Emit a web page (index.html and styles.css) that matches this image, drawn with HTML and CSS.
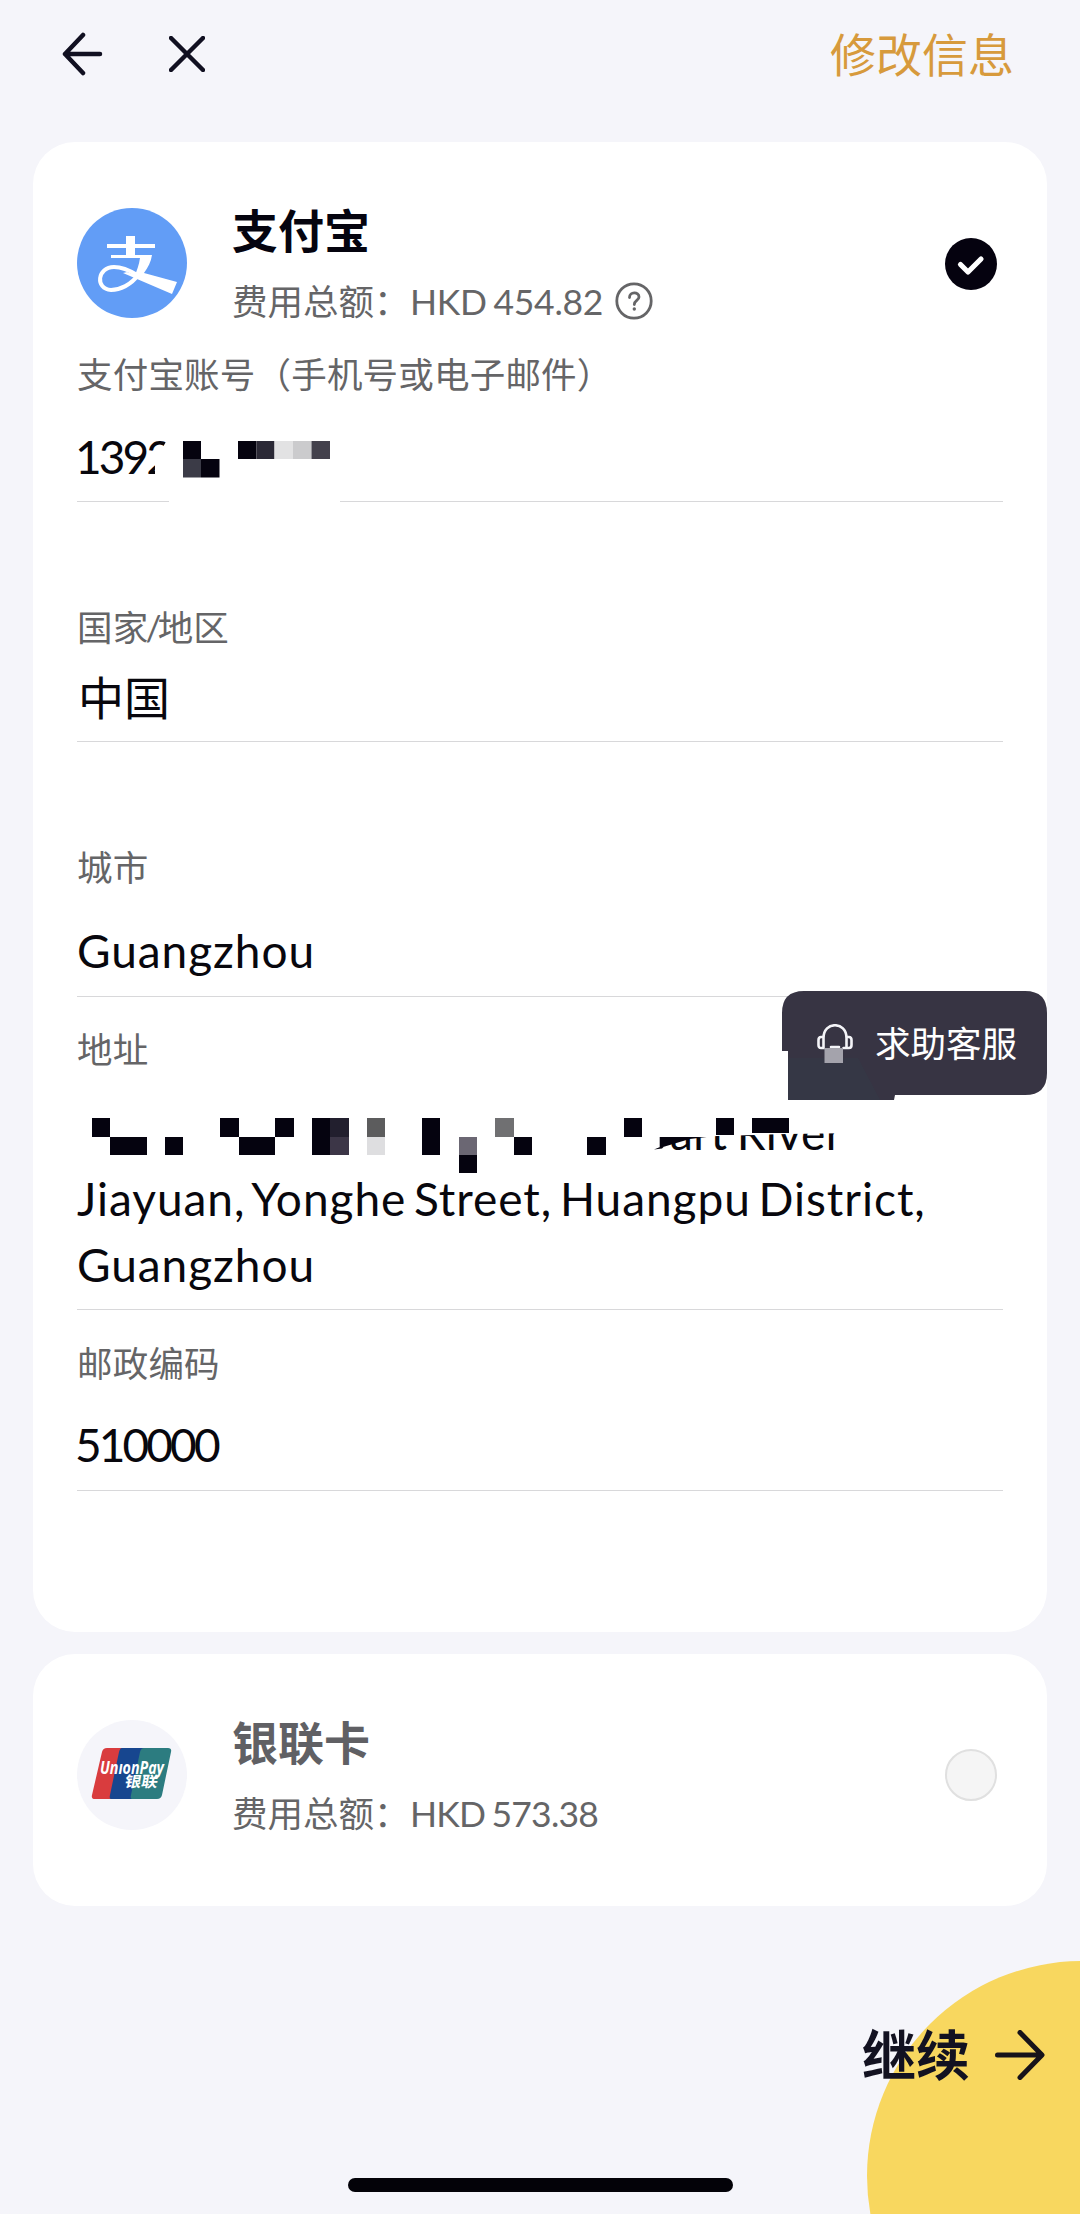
FILE: index.html
```html
<!DOCTYPE html>
<html lang="zh-CN">
<head>
<meta charset="utf-8">
<title>支付方式</title>
<link rel="stylesheet" href="styles.css">
</head>
<body>
<div class="screen">
  <header class="topbar">
    <svg class="icon-back" viewBox="0 0 42 44"><path d="M22 3 4 22l18 19M4 22h35"/></svg>
    <svg class="icon-close" viewBox="0 0 36 36"><path d="M2 2l32 32M34 2 2 34"/></svg>
    <a class="edit">修改信息</a>
  </header>

  <main class="cards">
    <section class="card card-alipay">
      <div class="method">
        <svg class="logo" viewBox="0 0 110 110">
          <circle cx="55" cy="55" r="55" fill="#629df6"/>
          <path fill="#fff" d="M49 28h9v8h20v4H58v7h17c-1 7-4 12-8 18l33 9-5 12-35-15-14-6 4-1 8 3c2-5 4-10 5-17H34v-3h15v-7H30v-4h19z"/>
          <path fill="none" stroke="#fff" stroke-width="4" stroke-linecap="round" d="M62 66C54 77 43 82 34 82 18 81 20 59 37 59c8 0 15 3 23 8"/>
        </svg>
        <div class="method-text">
          <h2 class="name">支付宝</h2>
          <p class="fee"><span class="fee-label">费用总额：</span><span class="amount">HKD 454.82</span>
            <svg class="help" viewBox="0 0 38 38"><circle cx="19" cy="19" r="17.2"/><path d="M14.5 15.5c0-6 9.500-6 9.500-.5 0 3.500-4.700 3.500-4.700 7.500"/><circle class="dot" cx="19.300" cy="27" r="1.700"/></svg>
          </p>
        </div>
        <svg class="check" viewBox="0 0 52 52"><circle cx="26" cy="26" r="26" fill="#05020f"/><path d="M15.500 26.500l7.500 7.500L36 21"/></svg>
      </div>

      <div class="field f-account">
        <label class="label">支付宝账号（手机号或电子邮件）</label>
        <div class="value digits">1392</div>
        <svg class="mosaic mosaic-account" viewBox="0 0 264 80">
          <path fill="#fff" d="M92 0h171v80H92zM70 31l13-2 7-12h4v40H78V42l-8 6z"/>
          <path fill="#05030f" d="M106 18h18v18h-18zM124 36h18.500v18.500H124zM161 18h18.500v18H161z"/>
          <path fill="#3b3b47" d="M106 36h18v18.500h-18z"/><path fill="#2b2936" d="M179.500 18h18v18h-18z"/>
          <path fill="#e2e2e3" d="M197.500 18h18.500v18h-18.500z"/><path fill="#cbcbcd" d="M216 18h18.500v18H216z"/><path fill="#43414c" d="M234.500 18H253v18h-18.500z"/>
        </svg>
      </div>

      <div class="field f-country">
        <label class="label">国家<span class="slash">/</span>地区</label>
        <div class="value cjk">中国</div>
      </div>

      <div class="field f-city">
        <label class="label">城市</label>
        <div class="value latin">Guangzhou</div>
      </div>

      <div class="field f-address">
        <label class="label">地址</label>
        <div class="value latin">
          <div class="line-masked"><span class="masked-tail">art River</span></div>
          <div class="line-street">Jiayuan, Yonghe Street, Huangpu District,</div>
          <div>Guangzhou</div>
        </div>
        <svg class="mosaic mosaic-address" viewBox="0 0 760 60">
          <g transform="translate(14.700 1.300) scale(18.350)" fill="#05030f" shape-rendering="crispEdges">
            <path d="M0 0h1v1H0zM1 1h2v1H1zM4 1h1v1H4zM7 0h1v1H7zM8 1h2v1H8zM10 0h1v1h-1zM12 0h1v2h-1zM18 0h1v2h-1zM20 2h1v1h-1zM23 1h1v1h-1zM27 1h1v1h-1zM29 0h1v1h-1zM34 0h1v.9h-1zM36 0h2v.8h-2z"/>
            <path fill="#221f2e" d="M13 0h1v1h-1z"/><path fill="#3c3647" d="M13 1h1v1h-1z"/>
            <path fill="#5c5c5d" d="M15 0h1v1h-1z"/><path fill="#dedee0" d="M15 1h1v1h-1z"/>
            <path fill="#6b6773" d="M20 1h1v1h-1z"/><path fill="#707072" d="M22 0h1v1h-1z"/>
          </g>
          <path fill="#05030f" d="M582.700 20h47l-17 2-30 9zM577 32.500l12-5-4 4z"/>
        </svg>
      </div>

      <div class="field f-post">
        <label class="label">邮政编码</label>
        <div class="value digits">510000</div>
      </div>
    </section>

    <section class="card card-union">
      <div class="method">
        <svg class="logo" viewBox="0 0 110 110">
          <circle cx="55" cy="55" r="55" fill="#f5f5fa"/>
          <path fill="#d93c3e" d="M30 28h24L42 79H18q-4 0-3-4l10-43q1-4 5-4z"/>
          <path fill="#17468f" d="M45 28h24L59 79H34q-2 0-1-4l9-43q1-4 3-4z"/>
          <path fill="#2c7c80" d="M67 28h24q4 0 3 4l-9 43q-1 4-5 4H55q-2 0-1-4l9-43q1-4 4-4z"/>
          <text class="up-en" x="23" y="54" textLength="64" lengthAdjust="spacingAndGlyphs">UnıonPay</text>
          <text class="up-cn" x="0" y="0" transform="translate(47 67) skewX(-10)" textLength="33" lengthAdjust="spacingAndGlyphs">银联</text>
        </svg>
        <div class="method-text">
          <h2 class="name">银联卡</h2>
          <p class="fee"><span class="fee-label">费用总额：</span><span class="amount amount-union">HKD 573.38</span></p>
        </div>
        <span class="radio"></span>
      </div>
    </section>
  </main>

  <div class="support">
    <svg class="support-bg" viewBox="0 0 265 110"><path fill="#373443" d="M22 0h221q22 0 22 22v60q0 22-22 22H113l-1 5H6V60H0V22Q0 0 22 0z"/><path fill="#343a47" d="M6 67h70l22 42H6z" opacity=".6"/></svg>
    <svg class="headset" viewBox="0 0 36 40"><path d="M6.500 14C6.500-3 29.500-3 29.500 14M6.500 13v11H4q-2.500 0-2.500-3v-5q0-3 2.500-3zM29.500 13v11H32q2.500 0 2.500-3v-5q0-3-2.500-3zM14 23h8M29.500 24h-3"/><path class="pixel" d="M7.500 24h18.500v15H7.500z"/></svg>
    <span class="support-text">求助客服</span>
  </div>

  <footer class="footer">
    <span class="disc"></span>
    <span class="next">继续</span>
    <svg class="icon-next" viewBox="0 0 50 50"><path d="M2.500 25h44M25 2.500 47 25 25 47.500"/></svg>
    <span class="home"></span>
  </footer>
</div>
</body>
</html>
```

FILE: styles.css
```css
* { box-sizing: border-box; margin: 0; padding: 0; }
body { background: #f5f5fa; font-family: Lato, "Noto Sans CJK SC", sans-serif; color: #08070d; }
.screen { position: relative; width: 1080px; height: 2214px; overflow: hidden; display: flex; flex-direction: column; }

.topbar { height: 142px; padding: 22px 66px 0 61px; display: flex; align-items: flex-start; }
.topbar path, .icon-next path { fill: none; stroke: #111021; stroke-width: 4.5; stroke-linecap: round; stroke-linejoin: round; }
.icon-back { width: 42px; height: 44px; margin-top: 10px; }
.icon-close { width: 36px; height: 36px; margin: 14px 0 0 66px; }
.edit { margin-left: auto; font-size: 46px; line-height: 66px; color: #d79a3c; white-space: nowrap; }

.cards { display: flex; flex-direction: column; gap: 22px; padding: 0 33px; }
.card { background: #fff; border-radius: 42px; padding: 66px 44px 0; }
.card-alipay { height: 1490px; }
.card-union { height: 252px; }

.method { display: flex; height: 110px; padding-right: 6px; }
.logo { width: 110px; height: 110px; flex: none; }
.method-text { margin-left: 45px; flex: 1; }
.name { font-size: 46px; line-height: 46px; font-weight: 700; color: #05040f; }
.card-union .name { color: #606064; }
.fee { display: flex; margin-top: 31px; height: 34px; line-height: 34px; font-size: 35.5px; color: #656567; white-space: nowrap; }
.fee-label { width: 178px; }
.amount { letter-spacing: -0.3px; word-spacing: -2px; }
.amount-union { letter-spacing: -0.8px; }
.help { width: 38px; height: 38px; margin: -3px 0 0 12px; fill: none; stroke: #656567; stroke-width: 2.8; stroke-linecap: round; }
.help .dot { fill: #656567; stroke: none; }
.check { width: 52px; height: 52px; margin-top: 30px; }
.check path { fill: none; stroke: #fff; stroke-width: 5.2; stroke-linecap: round; stroke-linejoin: round; }
.radio { width: 52px; height: 52px; margin-top: 29px; border: 2px solid #e0e0e0; border-radius: 50%; background: #f5f5f5; }
.up-en { font: italic 700 17px "Open Sans", sans-serif; fill: #fff; }
.up-cn { font: 700 15px "Noto Sans CJK SC", sans-serif; fill: #fff; }

.field { position: relative; border-bottom: 1px solid #d8d8da; display: flex; flex-direction: column; }
.label { font-size: 35.5px; line-height: 36px; letter-spacing: 0.2px; color: #656567; white-space: nowrap; }
.slash { margin: 0 -4px 0 -3px; }
.value { font-size: 46px; line-height: 66px; white-space: nowrap; }
.latin { letter-spacing: 0.95px; word-spacing: -5px; padding-top: 1px; margin-bottom: -1px; }
.digits { letter-spacing: -2.9px; margin-left: -2px; padding-top: 1px; margin-bottom: -1px; }
.cjk { padding-left: 1px; }
.f-account { margin-top: 39px; gap: 30px; padding-bottom: 12px; }
.f-country { margin-top: 108px; gap: 19px; padding-bottom: 10px; }
.f-city { margin-top: 108px; gap: 31px; padding-bottom: 13px; }
.f-address { margin-top: 35px; gap: 31px; padding-bottom: 12px; }
.f-post { margin-top: 36px; gap: 29px; padding-bottom: 13px; }
.line-masked { padding-left: 593px; letter-spacing: 0.5px; word-spacing: -3px; clip-path: polygon(590px 40px, 640px 36px, 710px 34px, 930px 31px, 930px 66px, 590px 66px); }

.mosaic { position: absolute; left: 0; }
.mosaic-account { top: 66px; width: 264px; height: 80px; }
.mosaic-address { top: 85px; width: 760px; height: 60px; }

.support { position: absolute; left: 782px; top: 991px; width: 265px; height: 110px; display: flex; padding: 33px 0 0 35px; }
.support-bg { position: absolute; left: 0; top: 0; width: 265px; height: 110px; }
.headset { position: relative; width: 36px; height: 40px; fill: none; stroke: #f4f4f8; stroke-width: 2.6; stroke-linecap: round; }
.headset .pixel { fill: #a4a3ac; stroke: none; }
.support-text { position: relative; margin: 2px 0 0 22px; font-size: 35.5px; line-height: 36px; color: #fff; white-space: nowrap; }

.footer { position: relative; flex: 1; display: flex; justify-content: flex-end; align-items: flex-start; padding: 117px 35px 0 0; }
.disc { position: absolute; left: 867px; top: 55px; width: 430px; height: 430px; border-radius: 50%; background: #f8d75f; }
.next { position: relative; font-size: 54px; line-height: 66px; font-weight: 700; color: #131221; }
.icon-next { position: relative; width: 50px; height: 50px; margin: 7px 0 0 25px; }
.icon-next path { stroke: #17131a; stroke-width: 5; }
.home { position: absolute; left: 348px; top: 272px; width: 385px; height: 14px; border-radius: 7px; background: #030208; }
```
